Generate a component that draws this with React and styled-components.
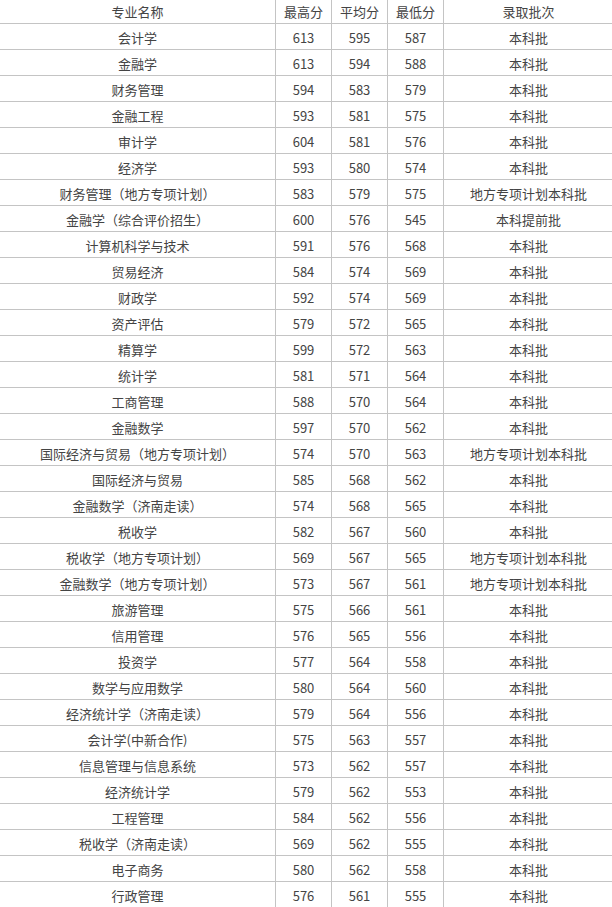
import React from 'react';
import styled, { createGlobalStyle } from 'styled-components';

const GlobalStyle = createGlobalStyle`
  html, body {
    margin: 0;
    padding: 0;
    background: #fff;
  }
  body {
    font-family: "Noto Sans CJK SC", "Noto Sans", sans-serif;
    color: #444;
  }
`;

const Frame = styled.div`
  width: 612px;
  height: 907px;
  overflow: hidden;
`;

const Table = styled.div`
  width: 614px;
  margin-left: -1px;
`;

const Row = styled.div`
  display: grid;
  grid-template-columns: 276px 56px 56px 56px 170px;
  height: ${(p) => (p.header ? 23 : 25)}px;
  border-bottom: 1px solid #c4c4c4;
`;

const Cell = styled.div`
  display: flex;
  align-items: center;
  justify-content: center;
  border-left: 1px solid #c4c4c4;
  font-size: 13px;
  padding-top: ${(p) => (p.header ? 0 : 1)}px;
  white-space: nowrap;
`;

const rows = [
  ['会计学', 613, 595, 587, '本科批'],
  ['金融学', 613, 594, 588, '本科批'],
  ['财务管理', 594, 583, 579, '本科批'],
  ['金融工程', 593, 581, 575, '本科批'],
  ['审计学', 604, 581, 576, '本科批'],
  ['经济学', 593, 580, 574, '本科批'],
  ['财务管理（地方专项计划）', 583, 579, 575, '地方专项计划本科批'],
  ['金融学（综合评价招生）', 600, 576, 545, '本科提前批'],
  ['计算机科学与技术', 591, 576, 568, '本科批'],
  ['贸易经济', 584, 574, 569, '本科批'],
  ['财政学', 592, 574, 569, '本科批'],
  ['资产评估', 579, 572, 565, '本科批'],
  ['精算学', 599, 572, 563, '本科批'],
  ['统计学', 581, 571, 564, '本科批'],
  ['工商管理', 588, 570, 564, '本科批'],
  ['金融数学', 597, 570, 562, '本科批'],
  ['国际经济与贸易（地方专项计划）', 574, 570, 563, '地方专项计划本科批'],
  ['国际经济与贸易', 585, 568, 562, '本科批'],
  ['金融数学（济南走读）', 574, 568, 565, '本科批'],
  ['税收学', 582, 567, 560, '本科批'],
  ['税收学（地方专项计划）', 569, 567, 565, '地方专项计划本科批'],
  ['金融数学（地方专项计划）', 573, 567, 561, '地方专项计划本科批'],
  ['旅游管理', 575, 566, 561, '本科批'],
  ['信用管理', 576, 565, 556, '本科批'],
  ['投资学', 577, 564, 558, '本科批'],
  ['数学与应用数学', 580, 564, 560, '本科批'],
  ['经济统计学（济南走读）', 579, 564, 556, '本科批'],
  ['会计学(中新合作)', 575, 563, 557, '本科批'],
  ['信息管理与信息系统', 573, 562, 557, '本科批'],
  ['经济统计学', 579, 562, 553, '本科批'],
  ['工程管理', 584, 562, 556, '本科批'],
  ['税收学（济南走读）', 569, 562, 555, '本科批'],
  ['电子商务', 580, 562, 558, '本科批'],
  ['行政管理', 576, 561, 555, '本科批'],
];

const headers = ['专业名称', '最高分', '平均分', '最低分', '录取批次'];

const App = () => {
  return (
    <Frame>
      <GlobalStyle />
      <Table>
        <Row header>
          {headers.map((h) => (
            <Cell header key={h}>
              {h}
            </Cell>
          ))}
        </Row>
        {rows.map((r) => (
          <Row key={r[0]}>
            {r.map((v, i) => (
              <Cell key={i}>{v}</Cell>
            ))}
          </Row>
        ))}
      </Table>
    </Frame>
  );
};

export default App;
